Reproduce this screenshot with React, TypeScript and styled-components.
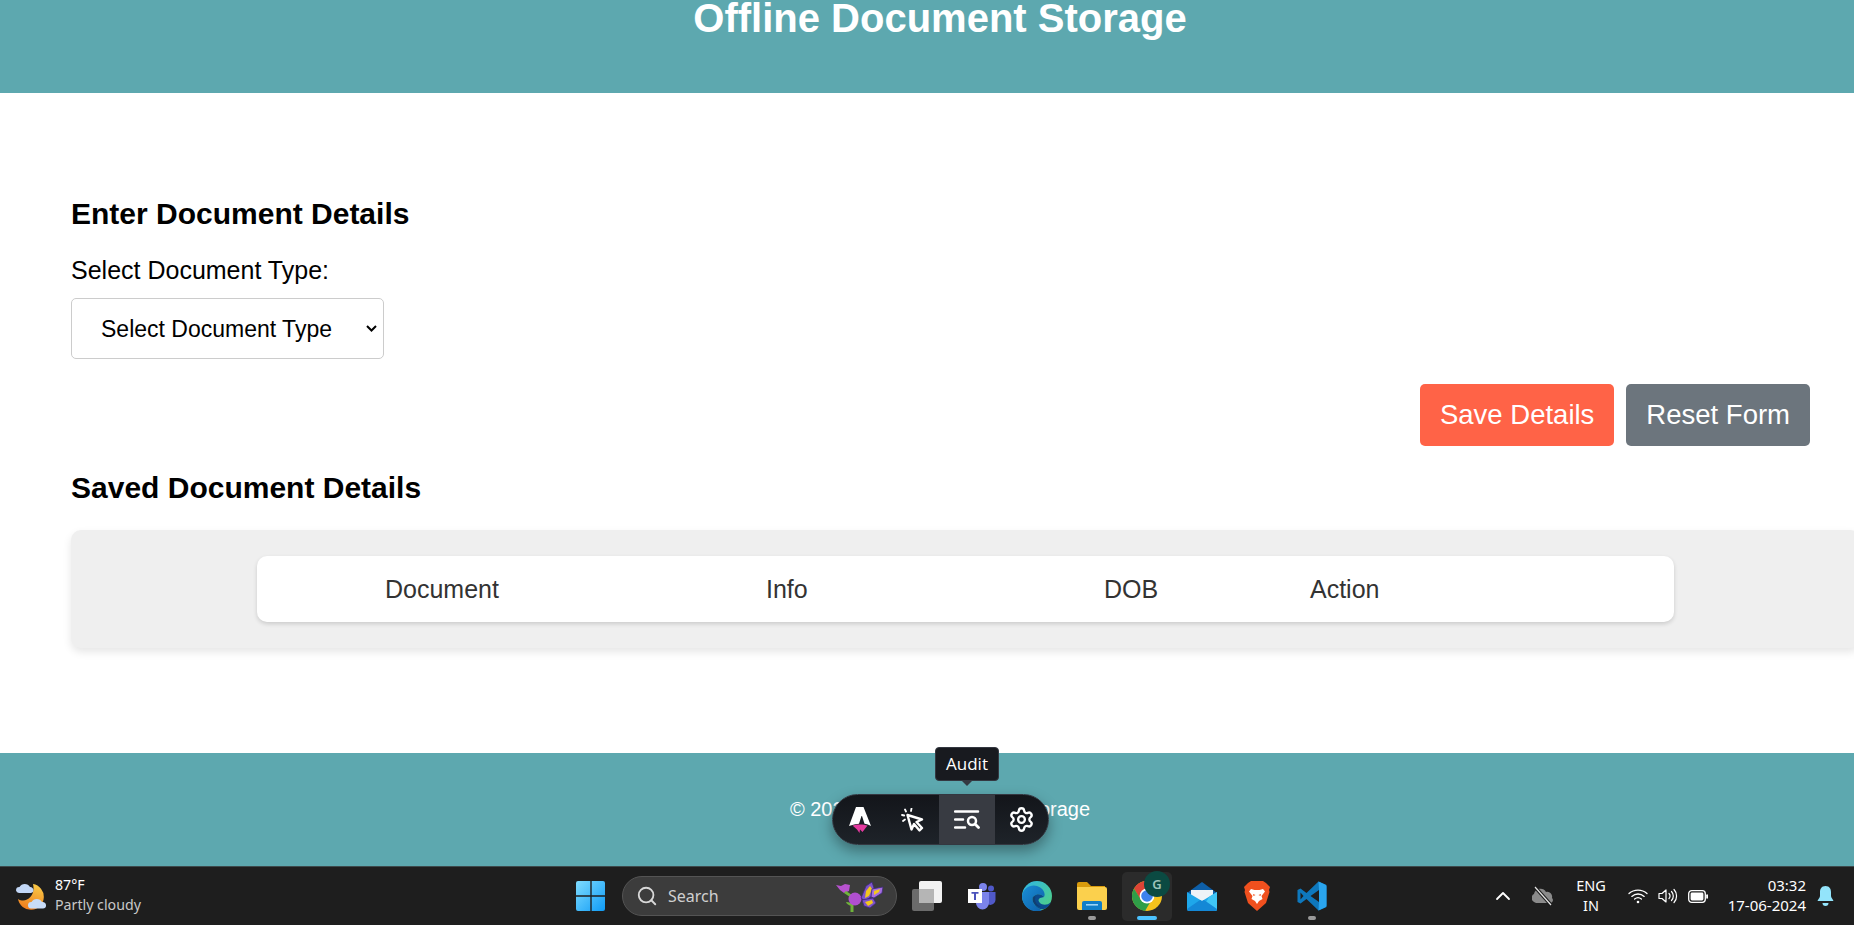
import styled, { createGlobalStyle } from 'styled-components'
import { Search, ChevronUp, Settings } from 'lucide-react'

const GlobalStyle = createGlobalStyle`
  html, body {
    margin: 0;
    padding: 0;
    background: #fff;
    font-family: "Liberation Sans", Arial, sans-serif;
  }
`

function WeatherIcon() {
  return (
    <svg width="30" height="28" viewBox="0 0 30 28">
      <defs>
        <linearGradient id="moon" x1="0.6" y1="0" x2="0.3" y2="1">
          <stop offset="0" stopColor="#f9c846" />
          <stop offset="1" stopColor="#ee7a1c" />
        </linearGradient>
      </defs>
      <path d="M17 2 A13 13 0 1 1 2 17 C10 22 20 14 17 2 Z" fill="url(#moon)" />
      <path d="M0 8.5 a3.4 3.4 0 0 1 3.5-3.4 a6 6 0 0 1 10.5 0 a3.2 3.2 0 0 1 3.5 3.2 a3 3 0 0 1-3 2.7 H3 a3.2 3.2 0 0 1-3-2.5 Z" fill="#c2d7f6" />
      <path d="M12 23.5 a3.4 3.4 0 0 1 3.5-3.4 a6 6 0 0 1 10.5 0 a3.2 3.2 0 0 1 4 3.2 a3 3 0 0 1-3 3.2 H15 a3.2 3.2 0 0 1-3-3 Z" fill="#c8dcf8" />
    </svg>
  )
}

function WindowsIcon() {
  return (
    <svg width="30" height="30" viewBox="0 0 30 30">
      <defs>
        <linearGradient id="win" x1="0" y1="0" x2="1" y2="1">
          <stop offset="0" stopColor="#7fdcff" />
          <stop offset="1" stopColor="#0f9bf5" />
        </linearGradient>
      </defs>
      <path d="M0 2 a2 2 0 0 1 2-2 H14.3 V14.3 H0 Z M15.7 0 H27 a2 2 0 0 1 2 2 V14.3 H15.7 Z M0 15.7 H14.3 V30 H2 a2 2 0 0 1-2-2 Z M15.7 15.7 H29 V28 a2 2 0 0 1-2 2 H15.7 Z" fill="url(#win)" />
    </svg>
  )
}

function ButterflyIcon() {
  return (
    <svg width="50" height="34" viewBox="0 0 50 34">
      <path d="M16 33 V24" stroke="#6fb33a" strokeWidth="3" />
      <path d="M16 27 q-5 -1 -6 -4 q5 0 7 3" fill="#6fb33a" />
      <path d="M0 6 L5 7 L9 5 L14 6 L13 12 L8 14 L4 11 Z" fill="#b752cf" />
      <path d="M10 12 l6 4 l-2 2 l-6-4 Z" fill="#6fb33a" />
      <circle cx="19" cy="20" r="6.5" fill="#b04fd0" />
      <path d="M25 19 L30 7 L36 3 L38 9 L36 17 L29 22 Z" fill="#7e54c8" stroke="#3c2a7a" strokeWidth="0.8" />
      <path d="M30 12 L34 7 L36 10 L33 17 L29 19 Z" fill="#f2c71d" />
      <path d="M36 10 L47 8 L46 14 L38 19 L35 18 Z" fill="#a66ee0" stroke="#3c2a7a" strokeWidth="0.8" />
      <path d="M38 12 L44 10 L43 13 L38 16 Z" fill="#f2c71d" />
      <path d="M26 21 L37 19 L40 24 L34 29 L28 27 Z" fill="#7e54c8" stroke="#3c2a7a" strokeWidth="0.8" />
      <path d="M29 23 L36 21 L37 24 L32 27 Z" fill="#f2c71d" />
    </svg>
  )
}

function TaskViewIcon() {
  return (
    <svg width="30" height="30" viewBox="0 0 30 30">
      <rect x="0" y="8" width="22" height="22" rx="2" fill="#6b6b6b" />
      <rect x="7" y="0" width="23" height="22" rx="2" fill="#f2f2f2" />
      <rect x="7" y="8" width="15" height="14" fill="#b5b5b5" />
    </svg>
  )
}

function TeamsIcon() {
  return (
    <svg width="28" height="28" viewBox="0 0 28 28">
      <circle cx="15" cy="5" r="4" fill="#7b83eb" />
      <circle cx="23" cy="6.5" r="3" fill="#5059c9" />
      <path d="M18 10 H27.5 V18 a5 5 0 0 1-7 4.5 Z" fill="#5059c9" />
      <path d="M8 10 H21 V21 a6.5 6.5 0 0 1-13 0 Z" fill="#7b83eb" />
      <rect x="0" y="7" width="14" height="14" fill="#fff" />
      <path d="M3.5 10 H10.5 V11.8 H8 V18 H6 V11.8 H3.5 Z" fill="#4b53bc" />
    </svg>
  )
}

function EdgeIcon() {
  return (
    <svg width="30" height="30" viewBox="0 0 30 30">
      <defs>
        <linearGradient id="edgeA" x1="0" y1="0" x2="1" y2="1">
          <stop offset="0" stopColor="#2fb6e8" />
          <stop offset="1" stopColor="#52d17a" />
        </linearGradient>
        <linearGradient id="edgeB" x1="0" y1="0" x2="1" y2="1">
          <stop offset="0" stopColor="#1a8fd6" />
          <stop offset="1" stopColor="#0d5ea8" />
        </linearGradient>
      </defs>
      <circle cx="15" cy="15" r="15" fill="url(#edgeA)" />
      <path d="M0 15 C1 7 9 3 15 5 C21 7 24 12 22 16 C20 13 15 12 12 15 C9 18 11 25 18 28 C19 29 20 29.5 20 29.5 C9 33 0 25 0 15 Z" fill="url(#edgeB)" />
      <path d="M12 15 C9 18 11 25 18 28 C23 29 27 26 29 21 C25 25 20 24 18 22 C16 20 16 18 18 17 L22 16 C20 13 15 12 12 15 Z" fill="#0b4a8c" />
      <path d="M13.5 16 C12 19 14 24 19 26 C15 26 10 22 10.5 17 C11 15 12.5 14.5 13.5 16 Z" fill="#1e2a3a" opacity=".35" />
    </svg>
  )
}

function ExplorerIcon() {
  return (
    <svg width="30" height="28" viewBox="0 0 30 28">
      <path d="M0 2 a2 2 0 0 1 2-2 H10 L14 4 H28 V10 H0 Z" fill="#d99b0c" />
      <path d="M0 5 H28 a2 2 0 0 1 2 2 V26 a2 2 0 0 1-2 2 H2 a2 2 0 0 1-2-2 Z" fill="#fbd04d" />
      <path d="M5 28 V21 a2 2 0 0 1 2-2 H23 a2 2 0 0 1 2 2 V28 Z" fill="#0f7ec8" />
      <rect x="9" y="22" width="12" height="1.6" fill="#9ad3f7" />
    </svg>
  )
}

function ChromeIcon() {
  return (
    <svg width="30" height="30" viewBox="0 0 30 30">
      <circle cx="15" cy="15" r="15" fill="#f4c21c" />
      <path d="M15 0 A15 15 0 0 0 2 7.5 L8.5 19 L15 9 H28 A15 15 0 0 0 15 0 Z" fill="#dd4436" />
      <path d="M2 7.5 A15 15 0 0 0 13 29.9 L19.5 19 L9 19 Z" fill="#2f9e48" />
      <circle cx="15" cy="15" r="7.4" fill="#fff" />
      <circle cx="15" cy="15" r="5.8" fill="#3d82ee" />
    </svg>
  )
}

function MailIcon() {
  return (
    <svg width="30" height="29" viewBox="0 0 30 29">
      <path d="M0 11 L15 0 L30 11 V16 H0 Z" fill="#0e5fa8" />
      <path d="M4 8 H26 V17 L15 23 L4 17 Z" fill="#eef3f7" />
      <path d="M0 10 L15 19 L30 10 V27 a2 2 0 0 1-2 2 H2 a2 2 0 0 1-2-2 Z" fill="#1ea7ea" />
      <path d="M30 10 V27 a2 2 0 0 1-2 2 H14 L22 15 Z" fill="#3fc5f5" />
      <path d="M0 27 L13 18 L15 19 L17 18 L30 27 a2 2 0 0 1-2 2 H2 a2 2 0 0 1-2-2 Z" fill="#1488d6" />
    </svg>
  )
}

function BraveIcon() {
  return (
    <svg width="26" height="30" viewBox="0 0 26 30">
      <path d="M7 0 H19 L22 2 L26 6 L25 9 L25.5 11 L22 22 L13 30 L4 22 L0.5 11 L1 9 L0 6 L4 2 Z" fill="#f0501e" />
      <path d="M7 8 L10.5 9 H15.5 L19 8 L21 10.5 L17.5 15 L18.5 18 L15 20 L13 23 L11 20 L7.5 18 L8.5 15 L5 10.5 Z" fill="#fff" />
      <path d="M9 13 L11.5 14 L9.5 15 Z M17 13 L14.5 14 L16.5 15 Z" fill="#f0501e" />
    </svg>
  )
}

function VsCodeIcon() {
  return (
    <svg width="30" height="30" viewBox="0 0 30 30">
      <path d="M21.5 0.5 L9.5 12 L3.5 7.5 L0.5 9 V21 L3.5 22.5 L9.5 18 L21.5 29.5 L29.5 26 V4 Z M22 9 L13.5 15 L22 21 Z M3.5 11.5 L6.5 15 L3.5 18.5 Z" fill="#0e78bd" fillRule="evenodd" />
      <path d="M21.5 0.5 L28 3.5 a2.5 2.5 0 0 1 1.5 2 V24.5 a2.5 2.5 0 0 1-1.5 2 L21.5 29.5 L22 21 V9 Z" fill="#2aa5ee" />
    </svg>
  )
}

function CloudOffIcon() {
  return (
    <svg width="22" height="20" viewBox="0 0 22 20">
      <path d="M2 16 a4.5 4.5 0 0 1 0-8 a6.5 6.5 0 0 1 12-2 a5 5 0 0 1 6 6 a3 3 0 0 1-1 5 H4 Z" fill="#8a8a8a" />
      <path d="M3 1 L19 19" stroke="#1c1c1c" strokeWidth="3.4" />
      <path d="M3 1 L19 19" stroke="#e6e6e6" strokeWidth="1.2" />
    </svg>
  )
}

function WifiIcon() {
  return (
    <svg width="20" height="16" viewBox="0 0 20 16" fill="none" stroke="#fff" strokeWidth="1.3" strokeLinecap="round">
      <path d="M1 5.5 C6 1 14 1 19 5.5" />
      <path d="M3.8 8.4 C7.4 5.2 12.6 5.2 16.2 8.4" />
      <path d="M6.6 11 C8.6 9.4 11.4 9.4 13.4 11" />
      <circle cx="10" cy="14" r="1.3" fill="#fff" stroke="none" />
    </svg>
  )
}

function VolumeIcon() {
  return (
    <svg width="20" height="16" viewBox="0 0 20 16" fill="none" stroke="#fff" strokeWidth="1.2" strokeLinecap="round" strokeLinejoin="round">
      <path d="M1 5.5 H4 L8 2 V14 L4 10.5 H1 Z" />
      <path d="M11 5.5 a3.5 3.5 0 0 1 0 5" />
      <path d="M13.5 3.5 a6.5 6.5 0 0 1 0 9" />
      <path d="M16 1.5 a9.5 9.5 0 0 1 0 13" />
    </svg>
  )
}

function BatteryIcon() {
  return (
    <svg width="20" height="13" viewBox="0 0 20 13">
      <rect x="0.7" y="0.7" width="16.6" height="11.6" rx="3" fill="none" stroke="#fff" strokeWidth="1.3" />
      <rect x="2.6" y="2.6" width="12.8" height="7.8" rx="1.4" fill="#fff" />
      <rect x="18.2" y="4.3" width="1.8" height="4.4" rx="0.9" fill="#fff" />
    </svg>
  )
}

function BellIcon() {
  return (
    <svg width="17" height="20" viewBox="0 0 17 20">
      <path d="M8.5 0 C4.5 0 3 3 3 6 V10 C3 12 1 13 0.5 15 H16.5 C16 13 14 12 14 10 V6 C14 3 12.5 0 8.5 0 Z" fill="#93e4fb" />
      <path d="M5.5 17 H11.5 A3 3 0 0 1 5.5 17 Z" fill="#93e4fb" />
    </svg>
  )
}

function AstroIcon() {
  return (
    <svg width="24" height="28" viewBox="0 0 24 28">
      <path d="M8 1 H15.5 L23 20 C20 18.5 18 18 16.5 17.8 L14 10 H13.5 L11 17.8 C9 18 6 18.5 1 20 Z" fill="#fff" />
      <path d="M4.5 19.5 C8 18 16 18 19.5 19.5 L14.5 26 L12 23.5 L11.5 27 L9 23.5 Z" fill="#e23a9e" />
    </svg>
  )
}

function InspectIcon() {
  return (
    <svg width="24" height="24" viewBox="0 0 24 24" fill="none" stroke="#fff" strokeLinecap="round" strokeLinejoin="round">
      <path d="M6.5 7 L21 11.5 L15.5 14 L21 20 L18.5 22.5 L13 16 L10.5 21.5 Z" strokeWidth="2.4" />
      <path d="M4 1.5 L5 3.5 M10.5 0.5 L10 3 M1 7 L3.2 7.5 M2 13 L4 11.5" strokeWidth="1.8" />
    </svg>
  )
}

function AuditIcon() {
  return (
    <svg width="26" height="20" viewBox="0 0 26 20" fill="none" stroke="#fff" strokeLinecap="round">
      <path d="M1 1.5 H24 M1 9.5 H9 M1 17.5 H11" strokeWidth="2.5" />
      <circle cx="18" cy="11" r="4" strokeWidth="2.5" />
      <path d="M21.5 14.5 L24.5 17.5" strokeWidth="2.8" />
    </svg>
  )
}

function App() {
  return (
    <>
      <GlobalStyle />
      <Screen>
        <Page>
          <Header>
            <Title>Offline Document Storage</Title>
          </Header>
          <Main>
            <SectionTitle>Enter Document Details</SectionTitle>
            <FieldLabel htmlFor="docType">Select Document Type:</FieldLabel>
            <TypeSelect id="docType" defaultValue="">
              <option value="">Select Document Type</option>
            </TypeSelect>
            <ButtonRow>
              <ActionButton $tone="save">Save Details</ActionButton>
              <ActionButton $tone="reset">Reset Form</ActionButton>
            </ButtonRow>
            <SavedTitle>Saved Document Details</SavedTitle>
            <TablePanel>
              <TableCard>
                <TableHead>Document</TableHead>
                <TableHead>Info</TableHead>
                <TableHead>DOB</TableHead>
                <TableHead>Action</TableHead>
              </TableCard>
            </TablePanel>
          </Main>
          <Footer>© 2024 Offline Document Storage</Footer>
        </Page>

        <DevToolbar>
          <ToolButton>
            <AstroIcon />
          </ToolButton>
          <ToolButton>
            <InspectIcon />
          </ToolButton>
          <ToolButton $active>
            <AuditIcon />
            <Tooltip>Audit</Tooltip>
          </ToolButton>
          <ToolButton>
            <Settings size={27} color="#fff" strokeWidth={2.1} />
          </ToolButton>
        </DevToolbar>

        <Taskbar>
          <WeatherBlock>
            <WeatherIcon />
            <WeatherText>
              <WeatherTemp>87°F</WeatherTemp>
              <WeatherDesc>Partly cloudy</WeatherDesc>
            </WeatherText>
          </WeatherBlock>
          <TaskIcons>
            <WindowsIcon />
            <SearchBox>
              <Search size={22} color="#d8d8d8" strokeWidth={2} />
              <SearchLabel>Search</SearchLabel>
              <ButterflySlot>
                <ButterflyIcon />
              </ButterflySlot>
            </SearchBox>
            <TaskViewIcon />
            <AppSlot>
              <TeamsIcon />
            </AppSlot>
            <AppSlot>
              <EdgeIcon />
            </AppSlot>
            <AppSlot>
              <ExplorerIcon />
              <RunDot />
            </AppSlot>
            <ActiveApp>
              <ChromeIcon />
              <ProfileBadge>G</ProfileBadge>
              <RunBar />
            </ActiveApp>
            <AppSlot>
              <MailIcon />
            </AppSlot>
            <AppSlot>
              <BraveIcon />
            </AppSlot>
            <AppSlot>
              <VsCodeIcon />
              <RunDot />
            </AppSlot>
          </TaskIcons>
          <Tray>
            <ChevronUp size={24} color="#fff" strokeWidth={1.8} />
            <CloudOffIcon />
            <TrayText>
              <span>ENG</span>
              <span>IN</span>
            </TrayText>
            <StatusIcons>
              <WifiIcon />
              <VolumeIcon />
              <BatteryIcon />
            </StatusIcons>
            <Clock>
              <span>03:32</span>
              <span>17-06-2024</span>
            </Clock>
            <BellIcon />
          </Tray>
        </Taskbar>
      </Screen>
    </>
  )
}

export default App

const Screen = styled.div`
  position: relative;
  display: flex;
  flex-direction: column;
  width: 100vw;
  height: 100vh;
  overflow: hidden;
`

const Page = styled.div`
  display: flex;
  flex-direction: column;
  flex: 1;
  width: 1880px;
  min-height: 0;
`

const Header = styled.header`
  height: 93px;
  flex-shrink: 0;
  background-color: #5da8af;
  text-align: center;
`

const Title = styled.h1`
  margin: 0;
  font-size: 40px;
  line-height: 36px;
  font-weight: 700;
  color: #fff;
`

const Main = styled.main`
  display: flex;
  flex-direction: column;
  flex: 1;
  padding: 104px 70px 0 71px;
`

const SectionTitle = styled.h2`
  margin: 0;
  font-size: 30px;
  line-height: 34px;
  font-weight: 700;
  color: #000;
`

const SavedTitle = styled(SectionTitle)`
  margin-top: 25px;
`

const FieldLabel = styled.label`
  margin-top: 25px;
  font-size: 25px;
  line-height: 29px;
  color: #000;
`

const TypeSelect = styled.select`
  align-self: flex-start;
  width: 313px;
  height: 61px;
  margin-top: 13px;
  padding: 0 25px 0 29px;
  border: 1px solid #ccc;
  border-radius: 5px;
  appearance: none;
  background: #fff url("data:image/svg+xml,%3Csvg xmlns='http://www.w3.org/2000/svg' width='11' height='7' viewBox='0 0 11 7'%3E%3Cpath d='M1 1l4.5 4.5L10 1' fill='none' stroke='%23000' stroke-width='2'/%3E%3C/svg%3E") no-repeat right 6px center;
  font-family: inherit;
  font-size: 23px;
  color: #000;
`

const ButtonRow = styled.div`
  display: flex;
  justify-content: flex-end;
  gap: 12px;
  margin-top: 25px;
`

const ActionButton = styled.button<{ $tone: 'save' | 'reset' }>`
  height: 62px;
  padding: 0 20px;
  border: none;
  border-radius: 5px;
  background-color: ${(p) => (p.$tone === 'save' ? '#ff6347' : '#6c757d')};
  font-family: inherit;
  font-size: 27.5px;
  color: #fff;
`

const TablePanel = styled.section`
  box-sizing: border-box;
  width: 1789px;
  height: 118px;
  margin-top: 25px;
  padding: 26px 186px 0;
  border-radius: 10px;
  background-color: #efefef;
  box-shadow: 0 4px 8px rgba(0, 0, 0, 0.1);
`

const TableCard = styled.div`
  display: grid;
  grid-template-columns: 381px 338px 206px 1fr;
  align-items: center;
  box-sizing: border-box;
  height: 66px;
  padding-left: 128px;
  border-radius: 10px;
  background-color: #fff;
  box-shadow: 0 2px 4px rgba(0, 0, 0, 0.15);
`

const TableHead = styled.div`
  font-size: 25px;
  color: #333;
`

const Footer = styled.footer`
  display: flex;
  align-items: center;
  justify-content: center;
  height: 113px;
  flex-shrink: 0;
  background-color: #5da8af;
  font-size: 20px;
  color: #fff;
`

const DevToolbar = styled.div`
  position: absolute;
  left: 832px;
  top: 794px;
  display: flex;
  width: 217px;
  height: 51px;
  box-sizing: border-box;
  border: 1px solid #343841;
  border-radius: 26px;
  background: linear-gradient(180deg, #13151a 0%, #1e2329 100%);
  box-shadow: 0 6px 14px rgba(0, 0, 0, 0.35);
`

const ToolButton = styled.div<{ $active?: boolean }>`
  position: relative;
  display: flex;
  flex: ${(p) => (p.$active ? '0 0 56px' : '1')};
  align-items: center;
  justify-content: center;
  background-color: ${(p) => (p.$active ? '#383b42' : 'transparent')};
`

const Tooltip = styled.div`
  position: absolute;
  left: -4px;
  top: -48px;
  width: 64px;
  height: 34px;
  box-sizing: border-box;
  border: 1px solid #343841;
  border-radius: 4px;
  background-color: #181a1f;
  font-family: "Open Sans", sans-serif;
  font-size: 17px;
  line-height: 32px;
  text-align: center;
  color: #fff;

  &::after {
    content: '';
    position: absolute;
    left: 25px;
    bottom: -6px;
    border-left: 6px solid transparent;
    border-right: 6px solid transparent;
    border-top: 6px solid #343841;
  }
`

const Taskbar = styled.div`
  display: flex;
  align-items: center;
  flex-shrink: 0;
  height: 59px;
  border-top: 1px solid #3c4a4c;
  box-sizing: border-box;
  background-color: #1e1e1e;
  font-family: "Noto Sans", sans-serif;
  color: #fff;
`

const WeatherBlock = styled.div`
  display: flex;
  align-items: center;
  gap: 9px;
  width: 576px;
  box-sizing: border-box;
  padding-left: 16px;
  flex-shrink: 0;
`

const WeatherText = styled.div`
  display: flex;
  flex-direction: column;
  padding-bottom: 2px;
  font-size: 14.2px;
  line-height: 20px;
`

const WeatherTemp = styled.span`
  color: #fff;
`

const WeatherDesc = styled.span`
  color: #c8c8c8;
`

const TaskIcons = styled.div`
  display: flex;
  align-items: center;
  gap: 17px;
`

const SearchBox = styled.div`
  display: flex;
  align-items: center;
  gap: 10px;
  width: 275px;
  height: 40px;
  box-sizing: border-box;
  padding-left: 13px;
  margin: 0 -2px 0 -1px;
  border: 1px solid #545454;
  border-radius: 20px;
  background-color: #3c3c3c;
`

const SearchLabel = styled.span`
  flex: 1;
  font-size: 16px;
  color: #d0d0d0;
`

const ButterflySlot = styled.div`
  display: flex;
  margin-right: 10px;
`

const AppSlot = styled.div`
  position: relative;
  display: flex;
  align-items: center;
  justify-content: center;
  width: 30px;
  height: 30px;
  margin-left: 8px;
`

const ActiveApp = styled(AppSlot)`
  width: 50px;
  height: 49px;
  margin: 0 -10px 0 -2px;
  border-radius: 5px;
  background-color: #2b2b2b;
`

const ProfileBadge = styled.div`
  position: absolute;
  right: 2px;
  top: -1px;
  width: 26px;
  height: 26px;
  border-radius: 50%;
  background-color: #0b4a42;
  font-size: 13px;
  font-weight: 600;
  line-height: 26px;
  text-align: center;
  color: #9ec4bb;
`

const RunDot = styled.div`
  position: absolute;
  left: 11px;
  bottom: -9px;
  width: 8px;
  height: 4px;
  border-radius: 2px;
  background-color: #9a9a9a;
`

const RunBar = styled.div`
  position: absolute;
  left: 15px;
  bottom: 1px;
  width: 20px;
  height: 4px;
  border-radius: 2px;
  background-color: #4cc2ff;
`

const Tray = styled.div`
  display: flex;
  align-items: center;
  gap: 17px;
  margin-left: auto;
  padding-right: 20px;
`

const TrayText = styled.div`
  display: flex;
  flex-direction: column;
  align-items: center;
  width: 40px;
  padding-bottom: 2px;
  font-size: 14.5px;
  line-height: 20px;
`

const StatusIcons = styled.div`
  display: flex;
  align-items: center;
  gap: 10px;
`

const Clock = styled.div`
  display: flex;
  flex-direction: column;
  align-items: flex-end;
  width: 98px;
  margin: 0 -6px 0 -17px;
  padding-bottom: 2px;
  font-size: 15px;
  line-height: 20px;
`
